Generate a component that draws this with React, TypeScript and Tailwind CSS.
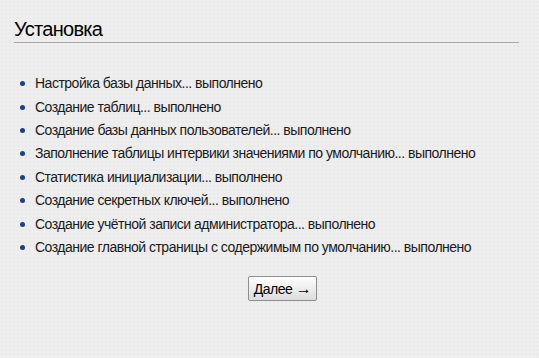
const steps = [
  'Настройка базы данных...',
  'Создание таблиц...',
  'Создание базы данных пользователей...',
  'Заполнение таблицы интервики значениями по умолчанию...',
  'Статистика инициализации...',
  'Создание секретных ключей...',
  'Создание учётной записи администратора...',
  'Создание главной страницы с содержимым по умолчанию...',
];

const App = () => {
  return (
    <div
      className="w-[539px] h-[358px] bg-[#eeeeee] text-[#1a1a1a] overflow-hidden"
      style={{
        backgroundImage: 'radial-gradient(#e2e2e2 0.6px, transparent 0.8px)',
        backgroundSize: '4px 4px',
      }}
    >
      <div className="pt-[17px] pl-[14px] pr-[20px]" style={{ fontFamily: '"Liberation Sans", Arial, sans-serif' }}>
        <h1 className="text-[20px] leading-[24px] tracking-[-0.7px] text-black border-b border-[#a8a8a8] pb-[1px]">Установка</h1>
        <ul className="mt-[29px] ml-[6px] flex flex-col">
          {steps.map((s) => (
            <li key={s} className="flex items-center h-[23.4px] text-[14px] tracking-[-0.5px]">
              <span className="w-[5px] h-[5px] rounded-full bg-[#1f3f7f] mr-[10px]" />
              <span>{s} выполнено</span>
            </li>
          ))}
        </ul>
        <div className="flex mt-[17px] pl-[234px]">
          <button className="h-[25px] w-[69px] text-[14px] tracking-[-0.5px] text-black border border-[#8e8e8e] rounded-[2px] bg-gradient-to-b from-white to-[#dcdcdc]">
            Далее <span className="text-[16px]">→</span>
          </button>
        </div>
      </div>
    </div>
  );
};

export default App;
